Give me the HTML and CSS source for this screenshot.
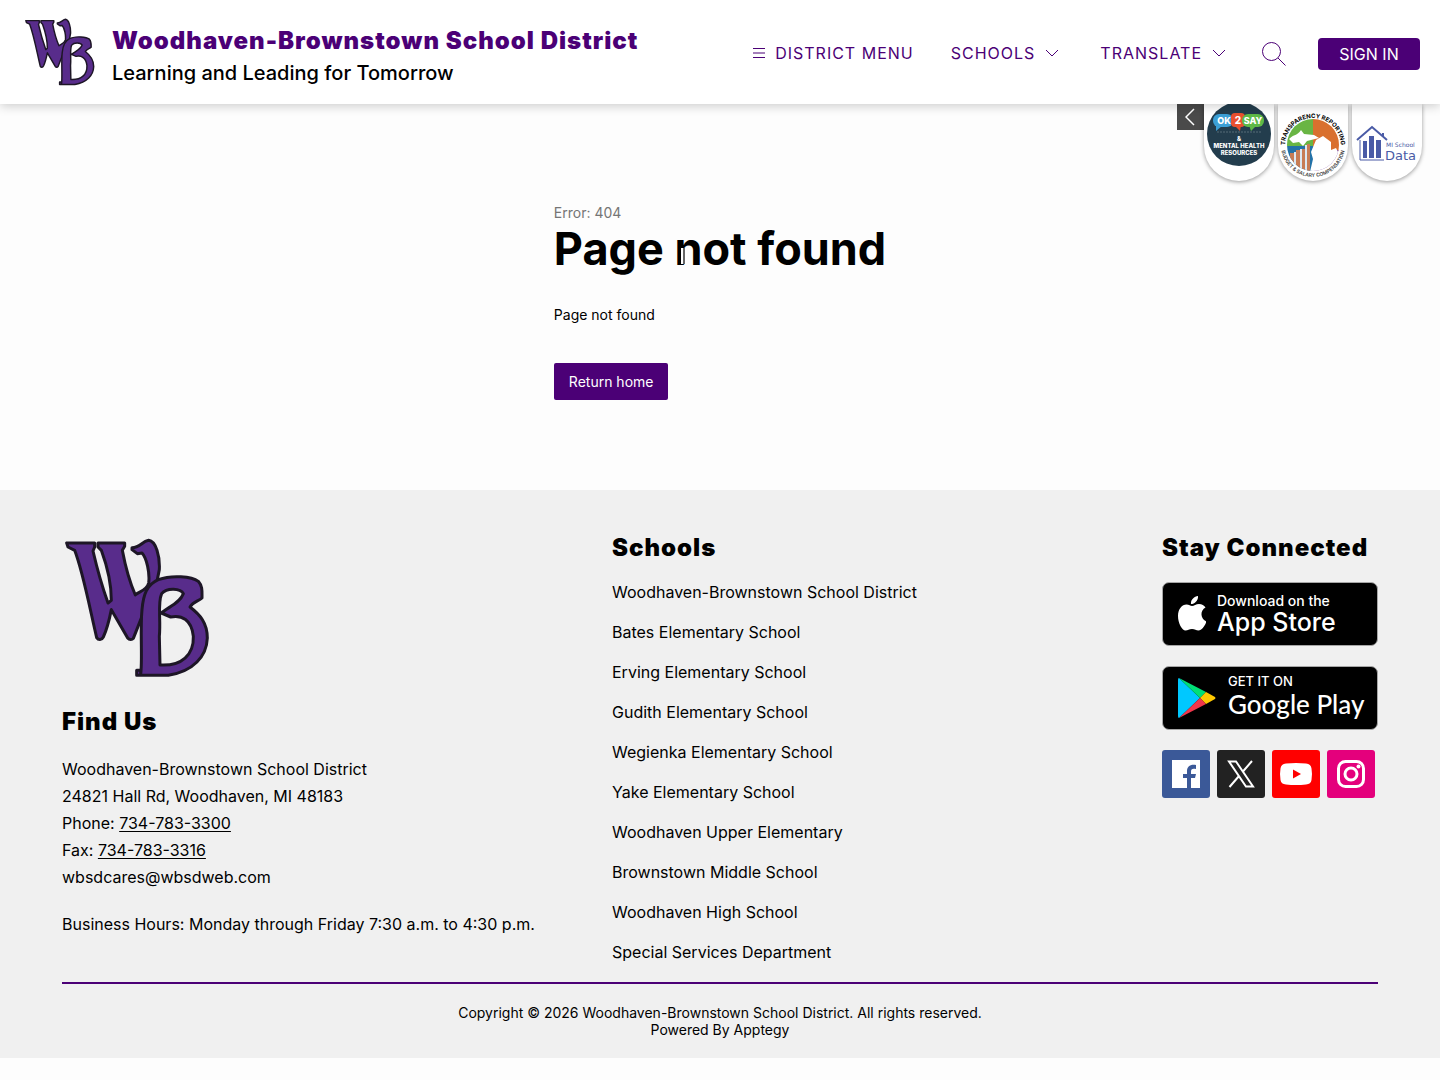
FILE: index.html
```html
<!DOCTYPE html>
<html lang="en">
<head>
<meta charset="utf-8">
<title>Page not found | Woodhaven-Brownstown School District</title>
<meta name="viewport" content="width=device-width, initial-scale=1">
<link rel="stylesheet" href="styles.css">
</head>
<body>
<svg class="defs" aria-hidden="true">
  <symbol id="wb" viewBox="45 55 435 420">
    <g fill="#582c8b" stroke="#1d1626" stroke-width="9" stroke-linejoin="round">
      <path d="M50 70H134V82L129 94C142 150 158 205 174 250L184 242C184 190 168 130 154 92L144 82V70H224V80L217 92C226 140 240 190 256 226C262 216 290 215 296 190C300 160 290 115 276 100L262 102L246 90V84C270 84 275 66 296 62C318 64 330 110 328 150L318 200L276 290L250 356C246 361 238 361 233 355L184 270C178 300 168 335 160 352C155 362 145 362 140 354C120 270 100 160 74 92L54 82Z"/>
      <path fill-rule="evenodd" d="M272 464C278 420 270 330 276 270C280 225 290 195 325 180C365 165 425 170 445 185C458 200 456 215 456 235C445 245 430 245 420 262C450 285 472 310 472 355C470 410 430 455 355 467H260V452H272ZM330 436C395 440 432 405 430 350C425 300 395 285 362 292L334 280C355 262 390 250 400 222C392 205 350 203 335 222C322 250 333 300 328 350Z"/>
    </g>
  </symbol>
  <symbol id="chev" viewBox="0 0 14 8"><path d="M1 1l6 6 6-6" fill="none" stroke="currentColor"/></symbol>
</svg>

<header class="header">
  <a class="brand" href="#">
    <svg class="brand-logo" role="img" aria-label="WB logo"><use href="#wb"/></svg>
    <span class="brand-text">
      <span class="brand-name">Woodhaven-Brownstown School District</span>
      <span class="brand-tag">Learning and Leading for Tomorrow</span>
    </span>
  </a>
  <nav class="nav">
    <button class="nav-item nav-menu" type="button">
      <svg class="burger" viewBox="0 0 12 10"><path d="M0 .5h12M0 5h12M0 9.5h12" stroke="currentColor"/></svg>DISTRICT MENU</button>
    <button class="nav-item nav-schools" type="button">SCHOOLS<svg class="chevron"><use href="#chev"/></svg></button>
    <button class="nav-item nav-translate" type="button">TRANSLATE<svg class="chevron"><use href="#chev"/></svg></button>
    <button class="search" type="button" aria-label="Search">
      <svg viewBox="0 0 24 24"><circle cx="9.500" cy="9.500" r="9" fill="none" stroke="currentColor"/><path d="M16 16l7.500 7.500" stroke="currentColor"/></svg>
    </button>
    <a class="sign-in" href="#">SIGN IN</a>
  </nav>
</header>

<aside class="badges">
  <button class="badges-toggle" type="button" aria-label="Hide links"><svg viewBox="0 0 10 18"><path d="M9 1L1 9l8 8" fill="none" stroke="currentColor" stroke-width="1.500"/></svg></button>
  <a class="badge" href="#">
    <svg viewBox="0 0 70 77" role="img" aria-label="OK2SAY">
      <circle cx="35" cy="30" r="32" fill="#233d4d"/>
      <rect x="9" y="10" width="20" height="13" rx="6" fill="#3b9fd6"/><path d="M12 21l0 6 6-5" fill="#3b9fd6"/>
      <rect x="27" y="9" width="14" height="14" rx="4" fill="#e8502f"/><path d="M31 22l5 5 1-6" fill="#e8502f"/>
      <rect x="38" y="10" width="22" height="13" rx="6" fill="#5db947"/><path d="M45 21l2 6 5-5" fill="#5db947"/>
      <g fill="#fff" font-family="Inter, sans-serif" font-weight="800" text-anchor="middle">
        <text x="20" y="20" font-size="9">OK</text><text x="34" y="20" font-size="10">2</text><text x="49" y="20" font-size="9">SAY</text>
        <text x="35" y="37" font-size="6">&amp;</text>
        <text x="35" y="44" font-size="6">MENTAL HEALTH</text><text x="35" y="51" font-size="6">RESOURCES</text>
      </g>
      <path d="M13 28H57" stroke="#566c79" stroke-dasharray="2 1"/>
    </svg>
  </a>
  <a class="badge" href="#">
    <svg viewBox="0 0 70 77" role="img" aria-label="Transparency Reporting">
      <defs>
        <clipPath id="disc"><circle cx="35" cy="41" r="26"/></clipPath>
        <path id="arc-top" d="M7 42a28 28 0 0 1 56 0"/>
        <path id="arc-bottom" d="M3 41a32 32 0 0 0 64 0"/>
      </defs>
      <g clip-path="url(#disc)">
        <path d="M5 10H35V42H5Z" fill="#69b544"/><path d="M35 10H65V48H35Z" fill="#d9702e"/>
        <path d="M5 42H35V70H5Z" fill="#2372a8"/><path d="M35 46H65V70H35Z" fill="#7d4c9e"/>
        <path d="M11 35c5-5 8-3 12-9l3 4 10 1 5 3-12 3-4 5-4-4-6 1zM38 36l7-4 8 6v8l5-2 4 8-6 16H32l3-13-2-7z" fill="#fff"/>
        <path d="M12 49h4v20h-4zM18 46h4v23h-4zM24 45h3v24h-3zM29 40h3v29h-3z" fill="#c77c55"/>
        <path d="M16 48h2v20h-2zM22 45h2v23h-2zM27 41h2v26h-2z" fill="#dce8f2"/>
      </g>
      <text class="ring-top"><textPath href="#arc-top" startOffset="50%">TRANSPARENCY REPORTING</textPath></text>
      <text class="ring-bottom"><textPath href="#arc-bottom" startOffset="50%">BUDGET &amp; SALARY COMPENSATION</textPath></text>
    </svg>
  </a>
  <a class="badge" href="#">
    <svg viewBox="0 0 70 77" role="img" aria-label="MI School Data">
      <path d="M5 36L20 23 35 36M31 33V29" fill="none" stroke="#4a5ba6" stroke-width="2"/>
      <path d="M8 36V56H32" fill="none" stroke="#4a5ba6"/>
      <path d="M11 37h4v17h-4zM17 32h5v22h-5zM24 36h5v18h-5z" fill="#4a5ba6"/>
      <g fill="#4a5ba6" font-family="DejaVu Sans, sans-serif"><text x="34" y="43" font-size="6">MI School</text><text x="33" y="56" font-size="13">Data</text></g>
    </svg>
  </a>
</aside>

<main class="main">
  <div class="error">
    <p class="error-code">Error: 404</p>
    <h1 class="error-title">Page not found<span class="ibeam" aria-hidden="true"></span></h1>
    <p class="error-text">Page not found</p>
    <a class="error-button" href="#">Return home</a>
  </div>
</main>

<footer class="footer">
  <div class="footer-grid">
    <section>
      <svg class="footer-logo" role="img" aria-label="WB logo"><use href="#wb"/></svg>
      <h2 class="footer-title">Find Us</h2>
      <address class="address">
        Woodhaven-Brownstown School District<br>
        24821 Hall Rd, Woodhaven, MI 48183<br>
        Phone: <a href="tel:7347833300">734-783-3300</a><br>
        Fax: <a href="tel:7347833316">734-783-3316</a><br>
        wbsdcares@wbsdweb.com
        <span class="hours">Business Hours: Monday through Friday 7:30 a.m. to 4:30 p.m.</span>
      </address>
    </section>
    <section>
      <h2 class="footer-title">Schools</h2>
      <ul class="schools">
        <li><a href="#">Woodhaven-Brownstown School District</a></li>
        <li><a href="#">Bates Elementary School</a></li>
        <li><a href="#">Erving Elementary School</a></li>
        <li><a href="#">Gudith Elementary School</a></li>
        <li><a href="#">Wegienka Elementary School</a></li>
        <li><a href="#">Yake Elementary School</a></li>
        <li><a href="#">Woodhaven Upper Elementary</a></li>
        <li><a href="#">Brownstown Middle School</a></li>
        <li><a href="#">Woodhaven High School</a></li>
        <li><a href="#">Special Services Department</a></li>
      </ul>
    </section>
    <section>
      <h2 class="footer-title">Stay Connected</h2>
      <a class="store store-apple" href="#">
        <svg class="apple" viewBox="0 0 28 36"><path fill="#fff" d="M20 0c.4 4-3 8-7 8-.5-4 3-7.500 7-8zM14 10c2 0 4-2 7-2 3 0 5 1.500 6.500 3.500-6 3.500-5 11.500 1 14-1.500 4-4.500 9-8 9-2.500 0-3.500-1.500-6.500-1.500s-4 1.500-6.500 1.500C4 34.500 0 27 0 20 0 13 4 8.500 8.500 8.500c2.500 0 4 1.500 5.500 1.500z"/></svg>
        <span class="store-text"><span class="store-small">Download on the</span><span class="store-big">App Store</span></span>
      </a>
      <a class="store store-google" href="#">
        <svg class="play" viewBox="0 0 38 42"><path d="M1 1Q0 1 0 3V39Q0 41 1 41L22 21Z" fill="#00c8ff"/><path d="M1 1L28 15 22 21Z" fill="#00df76"/><path d="M28 15L37 20Q38 21 37 22L28 27 22 21Z" fill="#ffc800"/><path d="M22 21L28 27 1 41Z" fill="#f0364b"/></svg>
        <span class="store-text"><span class="store-small">GET IT ON</span><span class="store-big">Google Play</span></span>
      </a>
      <div class="social">
        <a class="facebook" href="#" aria-label="Facebook"><svg viewBox="0 0 48 48"><path d="M10 10H38V38H10Z" fill="#fff"/><path d="M25 38V28h-4v-4h4v-3c0-4 3-7 9-6v4c-4-.5-5 0-5 3v2h5l-1 4h-4v10z" fill="#3b5998"/></svg></a>
        <a class="x" href="#" aria-label="X"><svg viewBox="0 0 48 48"><path d="M12 11.500H19L36 36.500H29ZM35 11L25.500 22M22 26L12.500 37" fill="none" stroke="#fff" stroke-width="2"/></svg></a>
        <a class="youtube" href="#" aria-label="YouTube"><svg viewBox="0 0 48 48"><path d="M14 13.500Q24 12.500 34 13.500 39 14 39.500 18.500 40.500 24 39.500 30 39 34 34 34.500 24 35.500 14 34.500 9 34 8.500 30 7.500 24 8.500 18.500 9 14 14 13.500Z" fill="#fff"/><path d="M21 19.500V28.500L29 24Z" fill="#f00"/></svg></a>
        <a class="instagram" href="#" aria-label="Instagram"><svg viewBox="0 0 48 48"><g fill="none" stroke="#fff" stroke-width="3"><rect x="11.500" y="11.500" width="25" height="25" rx="7"/><circle cx="24" cy="24" r="6"/></g><circle cx="31.500" cy="16.500" r="2" fill="#fff"/></svg></a>
      </div>
    </section>
  </div>
  <div class="legal">
    <p>Copyright © 2026 Woodhaven-Brownstown School District. All rights reserved.</p>
    <p>Powered By <a href="#">Apptegy</a></p>
  </div>
</footer>
</body>
</html>
```

FILE: styles.css
```css
* { box-sizing: border-box; }
body { margin: 0; background: #fdfdfd; color: #000; font: 16px/24px Inter, "Liberation Sans", sans-serif; }
h1, h2, p, ul { margin: 0; padding: 0; }
a { color: inherit; text-decoration: none; }
button { border: 0; padding: 0; background: none; color: inherit; font: inherit; cursor: pointer; }
svg { display: block; }
.defs { position: absolute; width: 0; height: 0; }

.header { position: relative; z-index: 2; display: flex; justify-content: space-between; align-items: center; height: 104px; padding: 0 20px 0 25px; background: #fff; box-shadow: 0 2px 10px rgba(0, 0, 0, .2); }
.brand { display: flex; align-items: center; gap: 17px; }
.brand-logo { width: 70px; height: 68px; }
.brand-text { display: flex; flex-direction: column; padding-top: 10px; }
.brand-name { color: #4b0076; font-size: 24px; font-weight: 900; line-height: 32px; letter-spacing: 1px; }
.brand-tag { font-size: 20px; font-weight: 500; line-height: 32px; }
.nav { display: flex; align-items: center; color: #4b0076; padding-top: 4px; }
.nav-item { display: flex; align-items: center; gap: 10px; padding-bottom: 2px; letter-spacing: 1px; }
.nav-schools { margin-left: 37px; }
.nav-translate { margin-left: 41px; }
.burger { width: 12px; height: 10px; }
.chevron { width: 14px; height: 8px; }
.search { margin-left: 36px; }
.search svg { width: 24px; height: 24px; }
.sign-in { margin-left: 32px; width: 102px; border-radius: 4px; background: #4b0076; color: #fff; line-height: 32px; text-align: center; }

.badges { position: absolute; z-index: 1; top: 104px; right: 18px; display: flex; gap: 4px; }
.badges-toggle { display: flex; align-items: center; justify-content: center; width: 27px; height: 26px; margin-right: -4px; padding-right: 2px; background: #4a4a4a; color: #fff; }
.badges-toggle svg { width: 10px; height: 18px; }
.badge { width: 70px; height: 77px; border-radius: 0 0 35px 35px; background: #fff; box-shadow: 0 1px 4px rgba(0, 0, 0, .4); }
.ring-top { font: 700 6px Inter, sans-serif; text-anchor: middle; }
.ring-bottom { fill: #444; font: 600 5px Inter, sans-serif; text-anchor: middle; }

.main { display: flex; justify-content: center; padding: 100px 20px 90px; }
.error { display: flex; flex-direction: column; align-items: flex-start; }
.error-code { color: #757575; font-size: 14px; line-height: 18px; }
.error-title { position: relative; font-size: 45px; font-weight: 700; line-height: 54px; }
/* text caret mark resting over the heading */
.ibeam { position: absolute; left: 127px; top: 26px; width: 6px; height: 16px; border: solid #fff; border-width: 0 2px; background: #666; }
.error-text { margin-top: 30px; font-size: 14px; line-height: 18px; }
.error-button { margin-top: 39px; padding: 0 15px; border-radius: 2px; background: #4b0076; color: #fff; font-size: 14px; line-height: 37px; }

.footer { padding: 44px 62px 20px; background: #f0f0f0; }
.footer-grid { display: grid; grid-template-columns: 1fr 1fr 216px; }
.footer-title { font-size: 24px; font-weight: 900; line-height: 28px; letter-spacing: 1px; }
.footer-logo { width: 145px; height: 140px; margin: 4px 0 30px 3px; }
.address { margin-top: 20px; font-style: normal; line-height: 27px; }
.address a { text-decoration: underline; text-underline-offset: 2px; }
.hours { display: block; margin-top: 20px; }
.schools { display: grid; gap: 16px; margin-top: 18px; list-style: none; }
.store { display: flex; align-items: center; height: 64px; margin-top: 20px; padding-left: 15px; border: 1px solid #a6a6a6; border-radius: 7px; background: #000; color: #fff; }
.store-apple { gap: 11px; }
.store-google { gap: 12px; }
.apple { width: 28px; height: 36px; }
.play { width: 38px; height: 42px; }
.store-text { display: flex; flex-direction: column; }
.store-small { font-size: 14px; font-weight: 500; line-height: 16px; }
.store-big { font-size: 25px; font-weight: 500; line-height: 26px; }
.store-google .store-small { font-size: 13px; }
.store-google .store-text { padding-bottom: 4px; }
.store-google .store-big { font-family: Lato, sans-serif; font-size: 26px; line-height: 30px; }
.social { display: flex; gap: 7px; margin-top: 20px; }
.social a { width: 48px; height: 48px; border-radius: 3px; }
.facebook { background: #3b5998; }
.x { background: #222; }
.youtube { background: #f00; }
.instagram { background: #e4007c; }
.legal { margin-top: 18px; padding-top: 20px; border-top: 2px solid #4b0076; font-size: 14px; line-height: 17px; text-align: center; }
```
